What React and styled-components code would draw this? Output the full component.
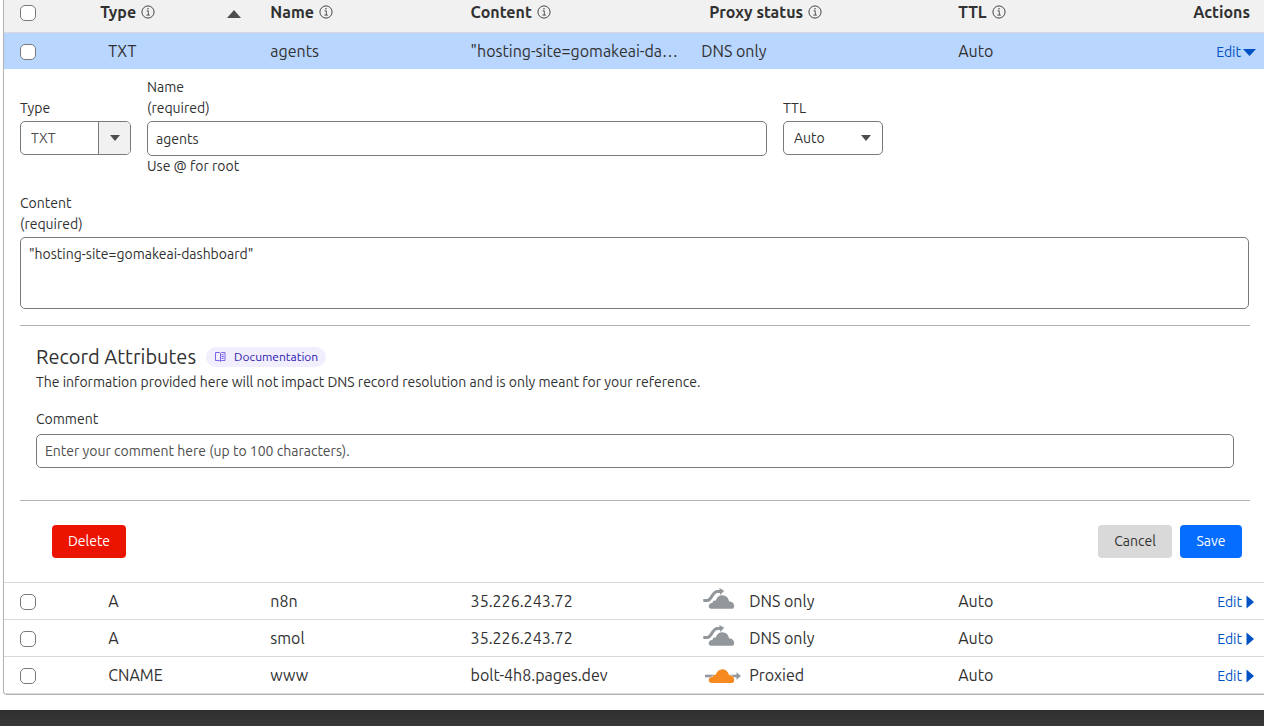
import React, { useState } from "react";
import styled, { createGlobalStyle, css } from "styled-components";

const GlobalStyle = createGlobalStyle`
  *, *::before, *::after { box-sizing: border-box; }
  body {
    margin: 0;
    background: #fff;
    color: #313131;
    font-family: "Ubuntu", "Noto Sans", sans-serif;
    font-size: 14px;
    line-height: 21px;
  }
  button, input, select, textarea { font: inherit; color: inherit; }
`;

const Page = styled.main`
  display: block;
`;

const TableFrame = styled.div`
  margin: 0 0 15px 3px;
  border: solid #b3b3b3;
  border-width: 0 0 1px 1px;
  border-radius: 0 0 0 4px;
  overflow: hidden;
`;

const Table = styled.table`
  width: 100%;
  table-layout: fixed;
  border-collapse: separate;
  border-spacing: 0;
  font-size: 16px;
`;

const Col = styled.col`
  width: ${(p) => p.$width};
`;

const HeadCell = styled.th`
  height: 33px;
  padding: 2px ${(p) => p.$end || 8}px 10px ${(p) => p.$indent || 8}px;
  border-bottom: 1px solid #d9d9d9;
  background: #f1f1f1;
  font-weight: 700;
  line-height: 20px;
  text-align: ${(p) => p.$align || "left"};
  white-space: nowrap;
`;

const HeadLabel = styled.span`
  display: flex;
  align-items: center;
  gap: 5px;
`;

const SortButton = styled.button`
  margin-left: auto;
  margin-right: 13px;
  padding: 3px 0 0;
  border: 0;
  background: none;
  display: flex;
`;

const Row = styled.tr`
  ${(p) =>
    p.$open &&
    css`
      background: #b9d6ff;
    `}
`;

const Cell = styled.td`
  height: ${(p) => (p.$open ? 36 : 37)}px;
  padding: 0 ${(p) => p.$end || 8}px 0 ${(p) => p.$indent || 8}px;
  border-bottom: ${(p) => (p.$open ? "0" : "1px solid #d9d9d9")};
  line-height: 24px;
  text-align: ${(p) => p.$align || "left"};
  white-space: nowrap;
  overflow: hidden;
  text-overflow: ellipsis;
`;

const Check = styled.input`
  appearance: none;
  display: block;
  width: 16px;
  height: 16px;
  margin: 2px 0 0 8px;
  border: 1px solid #797979;
  border-radius: 5px;
  background: #fff;
  &:checked { background: #0051c3; }
`;

const Proxy = styled.span`
  display: flex;
  align-items: center;
  gap: 8px;
`;

const EditButton = styled.button`
  display: inline-flex;
  align-items: center;
  gap: ${(p) => (p.$open ? 2 : 4)}px;
  padding: 0;
  border: 0;
  background: none;
  color: #0051c3;
  font-size: 14px;
  cursor: pointer;
`;

const PanelCell = styled.td`
  padding: 8px 14px 24px 16px;
  border-bottom: 1px solid #d9d9d9;
  font-size: 14px;
`;

const Fields = styled.div`
  display: flex;
  align-items: flex-start;
  gap: 16px;
`;

const Field = styled.div`
  display: flex;
  flex-direction: column;
  flex: ${(p) => p.$flex || "none"};
  padding-top: ${(p) => (p.$oneLine ? 21 : 0)}px;
`;

const Label = styled.label`
  display: flex;
  flex-direction: column;
  padding-bottom: ${(p) => p.$gap || 2}px;
`;

const inputFrame = css`
  width: 100%;
  border: 1px solid #797979;
  border-radius: 5px;
  background: #fff;
`;

const TextInput = styled.input`
  ${inputFrame}
  height: ${(p) => p.$height || 34}px;
  padding: 0 8px;
  &::placeholder { color: #4e4e4e; opacity: 1; }
`;

const TextArea = styled.textarea`
  ${inputFrame}
  display: block;
  height: 72px;
  padding: 6px 8px;
  resize: none;
`;

const SelectBox = styled.div`
  display: grid;
  align-items: center;
  width: ${(p) => p.$width}px;
  > * { grid-area: 1 / 1; }
`;

const Select = styled.select`
  ${inputFrame}
  appearance: none;
  height: 34px;
  padding: 0 10px;
  color: ${(p) => (p.$muted ? "#4e4e4e" : "inherit")};
`;

const SelectArrow = styled.span`
  justify-self: end;
  align-self: center;
  display: flex;
  align-items: center;
  justify-content: center;
  width: 32px;
  height: 32px;
  margin-right: 1px;
  pointer-events: none;
  ${(p) =>
    p.$boxed &&
    css`
      border-left: 1px solid #797979;
      border-radius: 0 4px 4px 0;
      background: #f1f1f1;
    `}
`;

const Content = styled.div`
  padding: 16px 1px 16px 0;
`;

const Attributes = styled.section`
  padding: 19px 16px 32px;
  border: solid #b3b3b3;
  border-width: 1px 0;
`;

const TitleLine = styled.div`
  display: flex;
  align-items: center;
  gap: 10px;
`;

const Title = styled.h2`
  margin: 0;
  font-size: 20px;
  font-weight: 400;
  line-height: 24px;
`;

const DocLink = styled.a`
  display: inline-flex;
  align-items: center;
  gap: 8px;
  height: 20px;
  padding: 0 8px;
  border-radius: 10px;
  background: #f1eefe;
  color: #2c16ad;
  font-size: 12px;
  line-height: 20px;
  text-decoration: none;
`;

const Note = styled.p`
  margin: 3px 0 16px;
`;

const Actions = styled.div`
  display: flex;
  gap: 8px;
  padding: 24px 8px 0 32px;
`;

const tones = {
  danger: ["#eb1400", "#fff"],
  neutral: ["#d9d9d9", "#313131"],
  primary: ["#056dff", "#fff"],
};

const Button = styled.button`
  height: 33px;
  min-width: ${(p) => p.$width}px;
  padding: 0;
  margin-right: ${(p) => (p.$push ? "auto" : "0")};
  border: 0;
  border-radius: 4px;
  background: ${(p) => tones[p.$tone][0]};
  color: ${(p) => tones[p.$tone][1]};
  cursor: pointer;
`;

const Footer = styled.footer`
  height: 16px;
  background: linear-gradient(#2f2f2f, #383838);
`;

const InfoIcon = () => (
  <svg width="14" height="14" viewBox="0 0 14 14" fill="none" stroke="#313131" aria-hidden="true">
    <circle cx="7" cy="7" r="6.1" strokeWidth="0.9" />
    <path d="M5.6 5.8H7.3V10M5.4 10.1H8.9" strokeWidth="0.8" />
    <circle cx="7" cy="3.8" r="0.7" fill="#313131" stroke="none" />
  </svg>
);

const Triangle = ({ w, h, d, color = "#4e4e4e" }) => (
  <svg width={w} height={h} viewBox={`0 0 ${w} ${h}`} aria-hidden="true">
    <path d={d} fill={color} />
  </svg>
);

const BookIcon = () => (
  <svg width="12" height="12" viewBox="0 0 12 12" fill="none" stroke="#6a56e8" aria-hidden="true">
    <path d="M1.5 1.5H5.500L6.500 2.500 7.500 1.500H11V9.500H7.500L6.500 10.500 5.500 9.500H1.500ZM6.500 2.500V10.500" strokeWidth="0.9" />
    <path d="M7.500 3.700H9.700M7.500 5.500H9.700M7.500 7.300H9.700" strokeWidth="0.9" />
  </svg>
);

const GreyCloud = () => (
  <svg width="40" height="26" viewBox="0 0 40 26" aria-hidden="true">
    <path d="M2.300 12.400H6.200C11 12.400 10.800 3.400 16.500 3.400H20" fill="none" stroke="#92979b" strokeWidth="3" />
    <path d="M18.300 0 23.200 2.700 19.300 7Z" fill="#92979b" />
    <path
      d="M10.500 20.700C7.700 20.700 6.900 17.900 8.500 16.200 9.300 15.200 10.400 14.800 11.500 15 11.600 13 13.200 12.200 14.600 12.700 15.700 9.200 18 7.200 21.200 7.200 25 7.200 27.700 10 28.100 13.600 31.500 13.400 33.600 16 33.100 18.800 32.900 20.100 32.300 20.700 31.300 20.700Z"
      fill="#92979b"
      stroke="#fff"
      strokeWidth="1"
      paintOrder="stroke"
    />
  </svg>
);

const OrangeCloud = () => (
  <svg width="40" height="24" viewBox="0 0 40 24" aria-hidden="true">
    <path d="M4 13H36" stroke="#92979b" strokeWidth="2.600" />
    <path d="M35.500 9.300 39.900 13 35.500 16.700Z" fill="#92979b" />
    <path
      d="M10.500 19.900C7.700 19.900 6.900 16.700 8.500 15.100 9.300 14.200 10.500 13.900 11.600 14 11.900 12.100 13.500 11.500 14.700 11.900 15.800 8.300 18.500 6.200 21.200 6.200 24.800 6.200 27.400 8.900 28 12.200 31.500 12 33.600 14.700 33.100 17.800 32.900 19.300 32.300 19.900 31.300 19.900Z"
      fill="#f6891f"
      stroke="#fff"
      strokeWidth="1"
      paintOrder="stroke"
    />
  </svg>
);

const records = [
  { type: "TXT", name: "agents", content: '"hosting-site=gomakeai-dashboard"', status: "DNS only", ttl: "Auto", open: true },
  { type: "A", name: "n8n", content: "35.226.243.72", status: "DNS only", icon: "grey", ttl: "Auto" },
  { type: "A", name: "smol", content: "35.226.243.72", status: "DNS only", icon: "grey", ttl: "Auto" },
  { type: "CNAME", name: "www", content: "bolt-4h8.pages.dev", status: "Proxied", icon: "orange", ttl: "Auto" },
];

function RecordRow({ record }) {
  const { open } = record;
  return (
    <Row $open={open}>
      <Cell $open={open}>
        <Check type="checkbox" aria-label={`Select ${record.name}`} />
      </Cell>
      <Cell $open={open} $indent={16}>{record.type}</Cell>
      <Cell $open={open}>{record.name}</Cell>
      <Cell $open={open} $end={12}>{record.content}</Cell>
      <Cell $open={open}>
        <Proxy>
          {record.icon === "grey" && <GreyCloud />}
          {record.icon === "orange" && <OrangeCloud />}
          {record.status}
        </Proxy>
      </Cell>
      <Cell $open={open}>{record.ttl}</Cell>
      <Cell $open={open} $align="right">
        <EditButton type="button" $open={open} aria-expanded={!!open}>
          Edit
          {open ? (
            <Triangle w={13} h={8} d="M0 1H13L6.500 8Z" color="#0051c3" />
          ) : (
            <Triangle w={10} h={14} d="M0.500 0.500 8 7 0.500 13.500Z" color="#0051c3" />
          )}
        </EditButton>
      </Cell>
    </Row>
  );
}

function EditPanel() {
  const [name, setName] = useState("agents");
  const [content, setContent] = useState('"hosting-site=gomakeai-dashboard"');
  return (
    <tr>
      <PanelCell colSpan={7}>
        <Fields>
          <Field $oneLine>
            <Label htmlFor="type">Type</Label>
            <SelectBox $width={111}>
              <Select id="type" $muted defaultValue="TXT">
                <option>TXT</option>
                <option>A</option>
                <option>CNAME</option>
              </Select>
              <SelectArrow $boxed>
                <Triangle w={10} h={6} d="M0 0H10L5 6Z" />
              </SelectArrow>
            </SelectBox>
          </Field>
          <Field $flex="0 1 620px">
            <Label htmlFor="name">
              <span>Name</span>
              <span>(required)</span>
            </Label>
            <TextInput id="name" $height={35} value={name} onChange={(e) => setName(e.target.value)} />
            <span>Use @ for root</span>
          </Field>
          <Field $oneLine>
            <Label htmlFor="ttl">TTL</Label>
            <SelectBox $width={100}>
              <Select id="ttl" defaultValue="Auto">
                <option>Auto</option>
                <option>1 min</option>
              </Select>
              <SelectArrow>
                <Triangle w={10} h={6} d="M0 0H10L5 6Z" />
              </SelectArrow>
            </SelectBox>
          </Field>
        </Fields>
        <Content>
          <Label htmlFor="content">
            <span>Content</span>
            <span>(required)</span>
          </Label>
          <TextArea id="content" value={content} onChange={(e) => setContent(e.target.value)} />
        </Content>
        <Attributes>
          <TitleLine>
            <Title>Record Attributes</Title>
            <DocLink href="#documentation">
              <BookIcon />
              Documentation
            </DocLink>
          </TitleLine>
          <Note>The information provided here will not impact DNS record resolution and is only meant for your reference.</Note>
          <Label htmlFor="comment" $gap={4}>Comment</Label>
          <TextInput id="comment" placeholder="Enter your comment here (up to 100 characters)." />
        </Attributes>
        <Actions>
          <Button type="button" $tone="danger" $width={74} $push>Delete</Button>
          <Button type="button" $tone="neutral" $width={74}>Cancel</Button>
          <Button type="button" $tone="primary" $width={62}>Save</Button>
        </Actions>
      </PanelCell>
    </tr>
  );
}

export default function App() {
  return (
    <Page>
      <GlobalStyle />
      <TableFrame>
        <Table>
          <colgroup>
            <Col $width="7%" />
            <Col $width="13.5%" />
            <Col $width="15.9%" />
            <Col $width="18.3%" />
            <Col $width="20.4%" />
            <Col $width="14%" />
            <Col $width="10.9%" />
          </colgroup>
          <thead>
            <tr>
              <HeadCell><Check type="checkbox" aria-label="Select all records" /></HeadCell>
              <HeadCell>
                <HeadLabel>
                  Type <InfoIcon />
                  <SortButton type="button" aria-label="Sort by type">
                    <Triangle w={14} h={8} d="M0 8 7 0 14 8Z" />
                  </SortButton>
                </HeadLabel>
              </HeadCell>
              <HeadCell><HeadLabel>Name <InfoIcon /></HeadLabel></HeadCell>
              <HeadCell><HeadLabel>Content <InfoIcon /></HeadLabel></HeadCell>
              <HeadCell $indent={16}><HeadLabel>Proxy status <InfoIcon /></HeadLabel></HeadCell>
              <HeadCell><HeadLabel>TTL <InfoIcon /></HeadLabel></HeadCell>
              <HeadCell $align="right" $end={14}>Actions</HeadCell>
            </tr>
          </thead>
          <tbody>
            {records.map((record) => (
              <React.Fragment key={record.name}>
                <RecordRow record={record} />
                {record.open && <EditPanel />}
              </React.Fragment>
            ))}
          </tbody>
        </Table>
      </TableFrame>
      <Footer />
    </Page>
  );
}
